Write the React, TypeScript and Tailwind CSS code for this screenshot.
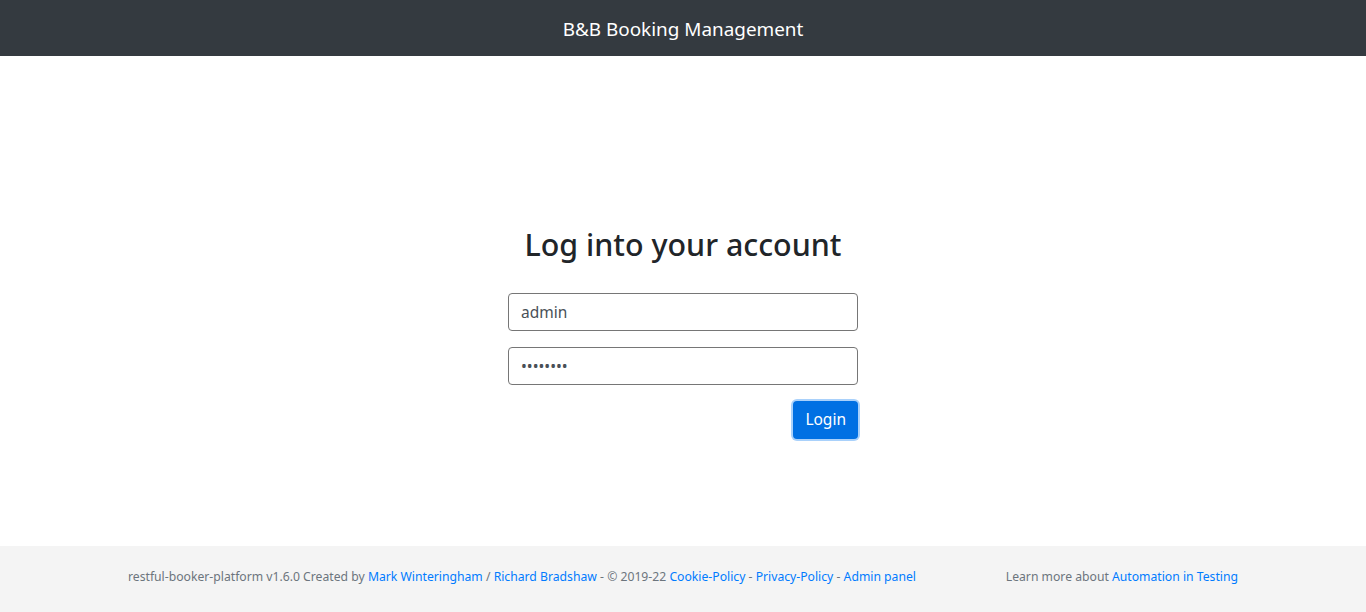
import React from 'react';

export default function App() {
  return (
    <div className="min-h-screen flex flex-col bg-white text-[#212529] font-['Noto_Sans',sans-serif]">
      <nav className="h-14 bg-[#343a40] flex items-center justify-center pt-[3px]">
        <span className="text-white text-[18.9px] leading-none">B&amp;B Booking Management</span>
      </nav>

      <main className="flex-1 flex flex-col items-center pt-[170px]">
        <h2 className="text-[30.4px] font-medium leading-[38px] mb-[29px]">Log into your account</h2>
        <form className="w-[350px] flex flex-col" onSubmit={(e) => e.preventDefault()}>
          <input
            type="text"
            defaultValue="admin"
            className="h-[38px] w-full rounded border border-[#767676] px-3 text-[15.5px] text-[#495057] outline-none"
          />
          <input
            type="password"
            defaultValue="password"
            className="mt-4 h-[38px] w-full rounded border border-[#767676] px-3 text-[15.5px] text-[#495057] outline-none"
          />
          <div className="mt-4 flex justify-end">
            <button
              type="submit"
              className="h-[38px] px-3 rounded bg-[#0070e3] text-white text-[15.5px] ring-2 ring-[#a9d1fb]"
            >
              Login
            </button>
          </div>
        </form>
      </main>

      <footer className="h-[66px] bg-[#f4f4f4] flex items-center pb-1">
        <div className="w-[1140px] mx-auto px-[15px] flex items-center text-[12.2px] text-[#6c757d]">
          <p className="flex-1">
            restful-booker-platform v1.6.0 Created by{' '}
            <a className="text-[#007bff]" href="#">Mark Winteringham</a> /{' '}
            <a className="text-[#007bff]" href="#">Richard Bradshaw</a> - © 2019-22{' '}
            <a className="text-[#007bff]" href="#">Cookie-Policy</a> -{' '}
            <a className="text-[#007bff]" href="#">Privacy-Policy</a> -{' '}
            <a className="text-[#007bff]" href="#">Admin panel</a>
          </p>
          <p className="text-right">
            Learn more about <a className="text-[#007bff]" href="#">Automation in Testing</a>
          </p>
        </div>
      </footer>
    </div>
  );
}
